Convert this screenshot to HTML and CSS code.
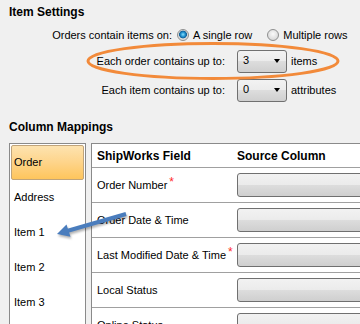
FILE: index.html
```html
<!DOCTYPE html>
<html lang="en">
<head>
    <meta charset="UTF-8">
    <meta name="viewport" content="width=device-width, initial-scale=1.0">
    <title>Item Settings</title>
    <link rel="stylesheet" href="styles.css">
</head>
<body>
    <div class="page">
        <h2 class="section-title">Item Settings</h2>

        <div class="setting-row row-mode">
            <span class="setting-label">Orders contain items on:</span>
            <label class="radio"><span class="radio-dot checked"></span>A single row</label>
            <label class="radio radio-second"><span class="radio-dot"></span>Multiple rows</label>
        </div>
        <div class="setting-row row-count">
            <span class="setting-label">Each order contains up to:</span>
            <div class="combo"><span class="combo-value">3</span><span class="combo-arrow"></span></div>
            <span class="unit">items</span>
        </div>
        <div class="setting-row row-count row-attr">
            <span class="setting-label">Each item contains up to:</span>
            <div class="combo"><span class="combo-value">0</span><span class="combo-arrow"></span></div>
            <span class="unit">attributes</span>
        </div>

        <h2 class="section-title mappings-title">Column Mappings</h2>

        <div class="mappings">
            <ul class="entity-list">
                <li class="entity selected">Order</li>
                <li class="entity">Address</li>
                <li class="entity">Item 1</li>
                <li class="entity">Item 2</li>
                <li class="entity">Item 3</li>
            </ul>

            <div class="field-grid">
                <div class="grid-head">
                    <div class="cell field">ShipWorks Field</div>
                    <div class="cell source">Source Column</div>
                </div>
                <div class="grid-row">
                    <div class="cell field">Order Number<span class="req">*</span></div>
                    <div class="cell source"><div class="source-btn"></div></div>
                </div>
                <div class="grid-row">
                    <div class="cell field">Order Date &amp; Time</div>
                    <div class="cell source"><div class="source-btn"></div></div>
                </div>
                <div class="grid-row">
                    <div class="cell field">Last Modified Date &amp; Time<span class="req">*</span></div>
                    <div class="cell source"><div class="source-btn"></div></div>
                </div>
                <div class="grid-row">
                    <div class="cell field">Local Status</div>
                    <div class="cell source"><div class="source-btn"></div></div>
                </div>
                <div class="grid-row">
                    <div class="cell field">Online Status</div>
                    <div class="cell source"><div class="source-btn"></div></div>
                </div>
            </div>
        </div>

        <!-- callouts drawn over the screenshot -->
        <svg class="annotations" width="360" height="324" viewBox="0 0 360 324">
            <ellipse cx="213" cy="61" rx="125" ry="17.5" fill="none" stroke="#f28a3a" stroke-width="3"/>
            <g class="callout-arrow">
                <line x1="126" y1="214" x2="67" y2="231" stroke="#4a7dbd" stroke-width="4"/>
                <polygon points="57,234 70.5,236.8 66.5,224.5" fill="#4a7dbd"/>
            </g>
        </svg>
    </div>
</body>
</html>
```

FILE: styles.css
```css
html, body {
    margin: 0;
    padding: 0;
}

body {
    font-family: "Liberation Sans", Arial, sans-serif;
    font-size: 11px;
    color: #000;
    background-color: #f0f0f0;
    overflow: hidden;
}

.page {
    position: relative;
    width: 360px;
    height: 324px;
    overflow: hidden;
}

.section-title {
    margin: 0;
    padding: 4px 9px 0;
    font-size: 12px;
    font-weight: bold;
    line-height: 16px;
}

/* item settings rows */

.setting-row {
    display: flex;
    align-items: center;
    height: 22px;
    margin-top: 4px;
}

.setting-label {
    text-align: right;
}

.row-mode .setting-label {
    width: 172px;
}

.row-count {
    height: 26px;
    margin-top: 2px;
}

.row-attr {
    margin-top: 3px;
}

.row-count .setting-label {
    width: 225px;
    padding-right: 4px;
}

.radio {
    display: flex;
    align-items: center;
    margin-left: 5px;
}

.radio-second {
    margin-left: 15px;
}

.radio-dot {
    box-sizing: border-box;
    width: 12px;
    height: 12px;
    margin-right: 4px;
    border: 1px solid #8e8f8f;
    border-radius: 50%;
    background: radial-gradient(circle at 50% 40%, #fafafa 0, #e4e4e4 50%, #cfcfcf 100%);
}

.radio-dot.checked {
    background: radial-gradient(circle at 50% 45%, #8be0fb 0, #2a9ad6 2px, #0e5f98 3.6px, #d8d8d8 4.2px, #eeeeee 100%);
}

.combo {
    box-sizing: border-box;
    display: flex;
    align-items: center;
    justify-content: space-between;
    width: 50px;
    height: 23px;
    margin-left: 8px;
    padding: 0 6px 0 5px;
    border: 1px solid #707070;
    border-radius: 3px;
    background: linear-gradient(#f2f2f2 0%, #ebebeb 50%, #dddddd 50%, #cfcfcf 100%);
}

.combo-value {
    margin-top: -3px;
}

.combo-arrow {
    width: 0;
    height: 0;
    border-left: 3.5px solid transparent;
    border-right: 3.5px solid transparent;
    border-top: 4px solid #000;
}

.unit {
    margin-left: 4px;
}

/* column mappings */

.mappings-title {
    margin-top: 16px;
    padding-top: 0;
}

.mappings {
    display: flex;
    align-items: flex-start;
    margin-top: 8px;
    padding-left: 9px;
}

.entity-list {
    flex: none;
    box-sizing: border-box;
    width: 77px;
    height: 200px;
    margin: 0;
    padding: 1px;
    list-style: none;
    background-color: #fff;
    border: 1px solid #8a8a8a;
}

.entity {
    box-sizing: border-box;
    height: 35px;
    padding-left: 2px;
    line-height: 33px;
    border: 1px solid transparent;
}

.entity.selected {
    border-color: #c0a47a;
    border-radius: 2px;
    background: linear-gradient(#fde3b0 0%, #fed48a 50%, #fec55c 100%);
}

.field-grid {
    flex: none;
    width: 300px;
    margin-left: 5px;
    background-color: #fff;
    border-top: 1px solid #8a8a8a;
    border-left: 1px solid #8a8a8a;
}

.grid-head,
.grid-row {
    display: grid;
    grid-template-columns: 145px 1fr;
    border-bottom: 1px solid #a0a0a0;
}

.grid-head {
    height: 23px;
    font-size: 12px;
    font-weight: bold;
}

.grid-row {
    height: 34px;
}

.cell {
    display: flex;
    align-items: center;
}

.cell.field {
    padding-left: 5px;
}

.req {
    align-self: flex-start;
    margin-top: 7px;
    margin-left: 2px;
    color: #ff2a2a;
    font-size: 12px;
}

.source-btn {
    box-sizing: border-box;
    width: 100%;
    height: 24px;
    border: 1px solid #707070;
    border-radius: 3px;
    background: linear-gradient(#f2f2f2 0%, #ebebeb 50%, #dddddd 50%, #cfcfcf 100%);
}

.annotations {
    position: absolute;
    left: 0;
    top: 0;
    pointer-events: none;
}

.callout-arrow {
    filter: drop-shadow(1px 2px 1px rgba(0, 0, 0, 0.3));
}
```
